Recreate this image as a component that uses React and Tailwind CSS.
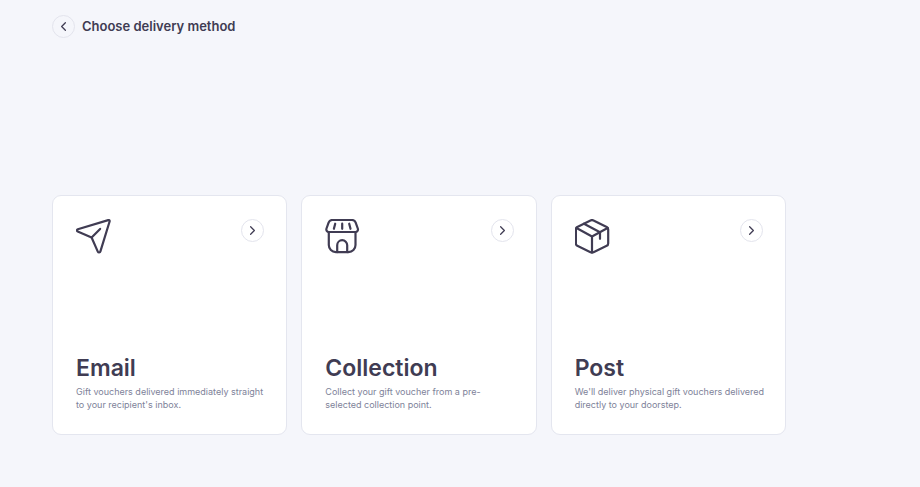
import React from 'react';
import { ChevronLeft, ChevronRight } from 'lucide-react';

const iconProps = {
  viewBox: '0 0 35 35',
  fill: 'none',
  stroke: 'currentColor',
  strokeWidth: 2.2,
  strokeLinecap: 'round',
  strokeLinejoin: 'round',
  className: 'size-[35px]',
  'aria-hidden': true,
};

const SendIcon = () => (
  <svg {...iconProps}>
    <path d="M1.8 10.2 32.2 1.1C33.2.8 33.9 1.5 33.6 2.5L24.4 32.4C24 33.8 22.4 33.9 21.8 32.6L15.6 18.5 1.7 12.4C.6 11.9.7 10.6 1.8 10.2Z" />
    <path d="m15.6 18.5 8.5-8.6" />
  </svg>
);

const StoreIcon = () => (
  <svg {...iconProps}>
    <path d="M7.3 1h19.7c1.8 0 3 .9 3.6 2.4l2.2 6.1c.6 1.9-.5 3.5-2.3 3.5h-26.7C2 13 .9 11.4 1.5 9.5l2.2-6.1C4.3 1.9 5.5 1 7.3 1Z" />
    <path d="M3.8 13v13.1a7 7 0 0 0 7 7h12.7a7 7 0 0 0 7-7V13" />
    <path d="M12.2 33.1V26.2a5 5 0 0 1 10 0v6.9" />
    <path d="M10.2 4.7 8.9 9.8M17.2 4.7v5.1M24.2 4.7l1.3 5.1" />
  </svg>
);

const BoxIcon = () => (
  <svg {...iconProps}>
    <path d="M15.5 1.4 2.3 8A2.7 2.7 0 0 0 .9 10.4v14A2.7 2.7 0 0 0 2.3 26.8l13.2 6.4a3.4 3.4 0 0 0 3 0L31.7 26.8a2.7 2.7 0 0 0 1.5-2.4V10.4A2.7 2.7 0 0 0 31.7 8L18.5 1.4a3.4 3.4 0 0 0-3 0Z" />
    <path d="M1.5 9 17 17.5 32.6 9M17 17.5v16" />
    <path d="M9 4.7 25 13.2v6.6" />
  </svg>
);

const methods = [
  {
    icon: SendIcon,
    title: 'Email',
    description: "Gift vouchers delivered immediately straight to your recipient's inbox.",
  },
  {
    icon: StoreIcon,
    title: 'Collection',
    description: 'Collect your gift voucher from a pre-selected collection point.',
  },
  {
    icon: BoxIcon,
    title: 'Post',
    description: "We'll deliver physical gift vouchers delivered directly to your doorstep.",
  },
];

const CircleButton = ({ label, children }) => (
  <button
    type="button"
    aria-label={label}
    className="flex size-[23px] shrink-0 items-center justify-center rounded-full border border-[#e3e4ed]"
  >
    {children}
  </button>
);

const MethodCard = ({ method }) => (
  <article className="flex min-h-60 flex-col justify-between rounded-[9px] border border-[#e4e6ef] bg-white py-[23px] pr-[22px] pl-[23px]">
    <div className="flex items-start justify-between">
      <method.icon />
      <CircleButton label={method.title}>
        <ChevronRight className="size-[15px]" />
      </CircleButton>
    </div>
    <div className="-mr-0.5">
      <h2 className="text-[23px] leading-[34px] font-semibold">{method.title}</h2>
      <p className="text-[9px] leading-[13px] text-[#7e8299]">
        {method.description}
      </p>
    </div>
  </article>
);

export default function App() {
  return (
    <main className="min-h-screen bg-[#f5f6fb] px-[52px] py-[15px] font-['Inter',sans-serif] text-[#403c53]">
      <header className="flex items-start gap-[7px]">
        <CircleButton label="Back">
          <ChevronLeft className="size-[15px]" />
        </CircleButton>
        <h1 className="text-[13px] leading-[22px] font-semibold">Choose delivery method</h1>
      </header>

      <section className="mt-[157px] grid max-w-[734px] grid-cols-3 gap-3.5">
        {methods.map((method) => (
          <MethodCard key={method.title} method={method} />
        ))}
      </section>
    </main>
  );
}
